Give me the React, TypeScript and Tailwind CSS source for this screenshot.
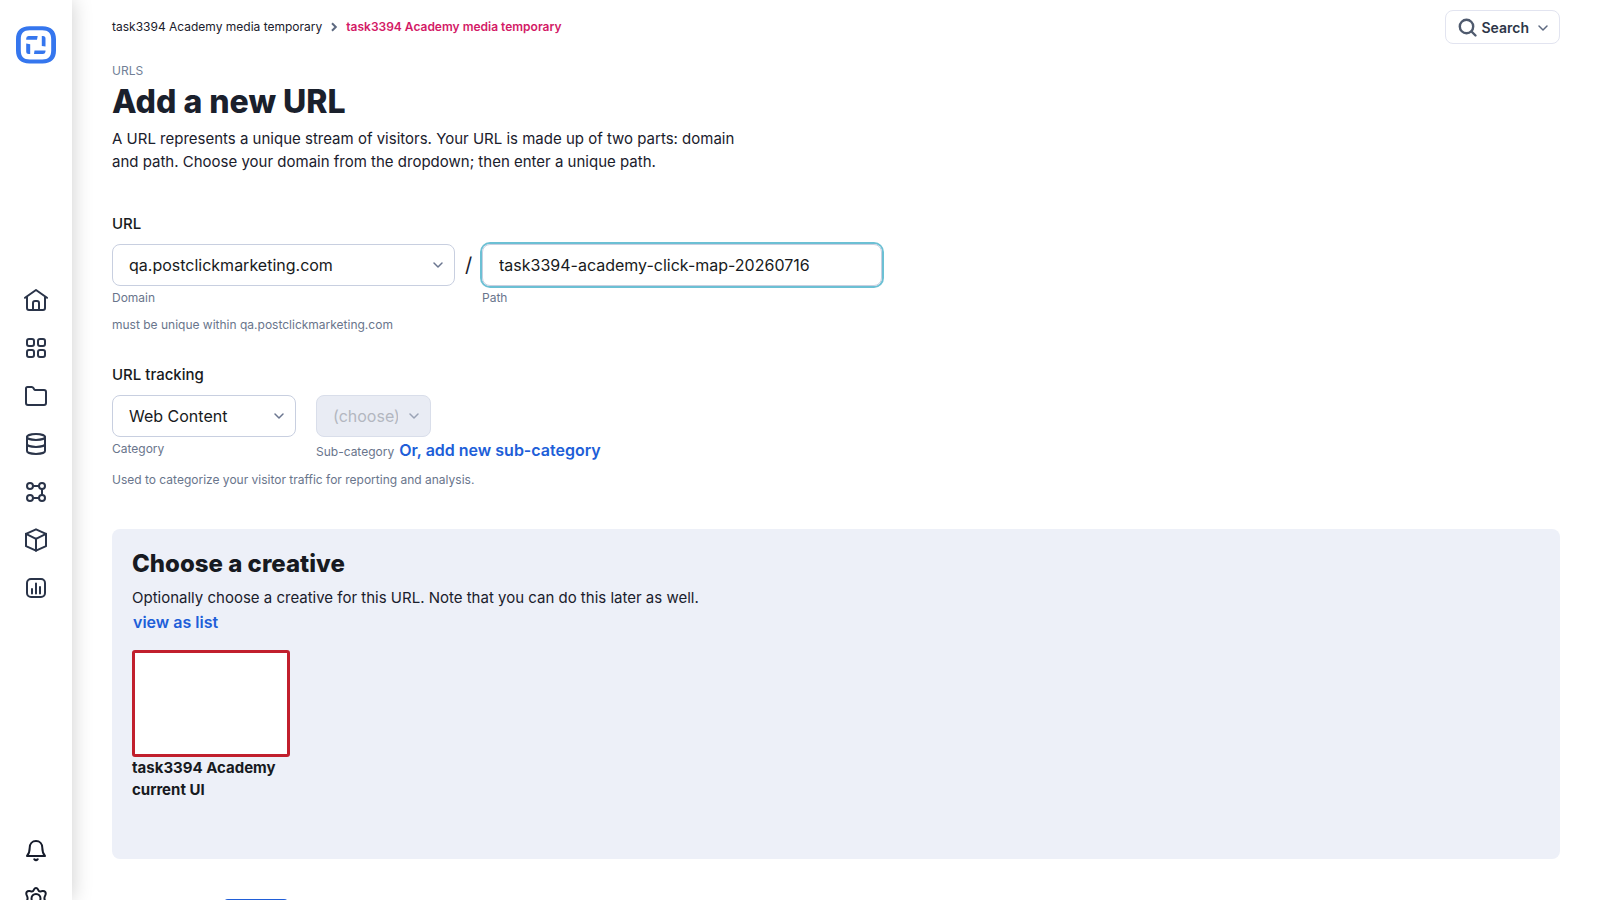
import type { ReactNode } from 'react';

const Icon = ({ children }: { children: ReactNode }) => (
  <svg
    viewBox="0 0 24 24"
    fill="none"
    stroke="currentColor"
    strokeWidth="2"
    strokeLinecap="round"
    strokeLinejoin="round"
    className="size-6"
    aria-hidden="true"
  >
    {children}
  </svg>
);

const Chevron = ({ className }: { className: string }) => (
  <svg
    viewBox="0 0 12 12"
    fill="none"
    stroke="currentColor"
    strokeWidth="1.5"
    strokeLinecap="round"
    strokeLinejoin="round"
    className={className}
    aria-hidden="true"
  >
    <path d="M2 4l4 4 4-4" />
  </svg>
);

const mainNav = [
  {
    label: 'Home',
    icon: (
      <>
        <path d="M1 9.8L12 2l11 7.8" />
        <path d="M3 9v11a2 2 0 0 0 2 2h14a2 2 0 0 0 2-2V9" />
        <path d="M9 22v-7a2 2 0 0 1 2-2h2a2 2 0 0 1 2 2v7" />
      </>
    ),
  },
  {
    label: 'Apps',
    icon: (
      <>
        <rect x="3" y="3" width="7" height="7" rx="2" />
        <rect x="14" y="3" width="7" height="7" rx="2" />
        <rect x="3" y="14" width="7" height="7" rx="2" />
        <rect x="14" y="14" width="7" height="7" rx="2" />
      </>
    ),
  },
  {
    label: 'Folders',
    icon: (
      <path d="M2 4.5a1.5 1.5 0 0 1 1.5-1.5h4.2a2 2 0 0 1 1.7 1l.7 1.2a1.5 1.5 0 0 0 1.3.8H20a2 2 0 0 1 2 2v11a2 2 0 0 1-2 2H4a2 2 0 0 1-2-2z" />
    ),
  },
  {
    label: 'Data',
    icon: (
      <>
        <ellipse cx="12" cy="5" rx="9" ry="2.9" />
        <path d="M3 5v14c0 1.6 4 2.9 9 2.9s9-1.3 9-2.9V5" />
        <path d="M3 12c0 1.6 4 2.9 9 2.9s9-1.3 9-2.9" />
      </>
    ),
  },
  {
    label: 'Flows',
    icon: (
      <>
        <circle cx="6" cy="6" r="3" />
        <circle cx="18" cy="6" r="3" />
        <circle cx="6" cy="18" r="3" />
        <circle cx="18" cy="18" r="3" />
        <path d="M9 6h6M18 9v6M9 18h6" />
      </>
    ),
  },
  {
    label: 'Packages',
    icon: (
      <>
        <path d="M12 1.3l10 4.5v12.4l-10 4.5-10-4.5V5.8z" />
        <path d="M2 5.8l10 5 10-5M12 10.8v11.9" />
      </>
    ),
  },
  {
    label: 'Reports',
    icon: (
      <>
        <rect x="3" y="3" width="18" height="18" rx="4" />
        <path d="M8 13v4.5M12 7.5v10M16 11v6.5" />
      </>
    ),
  },
];

const footerNav = [
  {
    label: 'Notifications',
    icon: (
      <>
        <path d="M3 18c2.3-2.5 2.7-5 2.7-8.2C5.7 5.8 8.3 3 12 3s6.3 2.8 6.3 6.8c0 3.2.4 5.7 2.7 8.2z" />
        <path d="M10.3 21.3c.9.9 2.5.9 3.4 0" />
      </>
    ),
  },
  {
    label: 'Settings',
    icon: (
      <>
        <circle cx="12" cy="12.5" r="4.5" />
        <path d="M10.2 3.1a2 2 0 0 1 3.6 0l.5 1.1a2 2 0 0 0 2.1 1.2l2.1-.3c2.5-.3 3.7 1.5 3 3.5l-.5 1.3a5 5 0 0 0 0 4.6l.5 1.3c.7 2-.5 3.8-3 3.5l-2.1-.3a2 2 0 0 0-2.1 1.2l-.5 1.1a2 2 0 0 1-3.6 0l-.5-1.1a2 2 0 0 0-2.1-1.2l-2.1.3c-2.500.3-3.700-1.500-3-3.500l.5-1.300a5 5 0 0 0 0-4.600l-.5-1.300c-.7-2 .5-3.800 3-3.500l2.100.3A2 2 0 0 0 9.700 4.200z" />
      </>
    ),
  },
];

function Sidebar() {
  return (
    <aside className="z-10 flex h-screen w-18 shrink-0 flex-col items-center overflow-y-clip bg-white shadow-[0_0_20px_rgba(0,0,0,0.2)]">
      <a href="#home" aria-label="Dashboard" className="mt-6 mb-56 block shrink-0">
        <svg viewBox="0 0 40 40" className="size-10 text-[#3576ee]" aria-hidden="true">
          <path
            fill="currentColor"
            fillRule="evenodd"
            d="M13.500 2.200h13C35.500 2.200 40 7 40 15.200v11.400c0 8.200-4.500 13-13.500 13h-13C4.500 39.600 0 34.800 0 26.600v-11.400C0 7 4.500 2.200 13.500 2.200zM13.800 6.300C7.500 6.300 4.800 9.300 4.800 15.300v11.200c0 6 2.700 9 9 9h12.400c6.300 0 9-3 9-9V15.300c0-6-2.700-9-9-9z"
          />
          <path
            fill="currentColor"
            d="M12.500 12H21.700L21 15.800H10.200v-1.300a2.500 2.500 0 0 1 2.300-2.500zM25.800 12H27a2.500 2.500 0 0 1 2.500 2.500V22.500L25.800 21.900zM10.200 19.600l4 .7V30H12.700a2.500 2.500 0 0 1-2.500-2.500zM18.500 26.400H29.500V27.600a2.400 2.400 0 0 1-2.400 2.400H18z"
          />
        </svg>
      </a>
      <nav aria-label="Main" className="flex shrink-0 flex-col gap-6 text-[#2a3449]">
        {mainNav.map((item) => (
          <a key={item.label} href="#nav" aria-label={item.label}>
            <Icon>{item.icon}</Icon>
          </a>
        ))}
      </nav>
      <nav
        aria-label="Account"
        className="mt-[238px] flex shrink-0 flex-col gap-6 text-[#161c2b]"
      >
        {footerNav.map((item) => (
          <a key={item.label} href="#account" aria-label={item.label}>
            <Icon>{item.icon}</Icon>
          </a>
        ))}
      </nav>
    </aside>
  );
}

function Select({
  id,
  option,
  width,
  disabled = false,
}: {
  id: string;
  option: string;
  width: string;
  disabled?: boolean;
}) {
  return (
    <div className={`relative ${width}`}>
      <select
        id={id}
        disabled={disabled}
        className="block h-[42px] w-full appearance-none rounded-lg border border-[#c8cfe0] bg-white pr-8 pl-4 text-base text-[#171a21] disabled:border-[#d9deea] disabled:bg-[#e9ecf4] disabled:text-[#b3b7c0] disabled:opacity-100"
      >
        <option>{option}</option>
      </select>
      <Chevron
        className={`pointer-events-none absolute top-[15px] right-[11px] size-3 ${disabled ? 'text-[#9aa3b5]' : 'text-[#6b7690]'}`}
      />
    </div>
  );
}

export default function App() {
  return (
    <div className="flex h-screen overflow-hidden bg-white font-['Inter',sans-serif] text-[#1a202c]">
      <Sidebar />
      <main className="min-w-0 flex-1 px-10">
        <header className="flex items-start justify-between pt-[10px]">
          <nav aria-label="Breadcrumb" className="flex h-[34px] items-center text-xs">
            <a href="#parent">task3394 Academy media temporary</a>
            <svg
              viewBox="0 0 24 12"
              fill="none"
              stroke="#5d6980"
              strokeWidth="2"
              className="h-3 w-6"
              aria-hidden="true"
            >
              <path d="M10 2.2L13.8 6 10 9.8" />
            </svg>
            <a href="#current" className="font-semibold text-[#d31a66]">
              task3394 Academy media temporary
            </a>
          </nav>
          <button
            type="button"
            className="flex h-[34px] items-center rounded-lg border border-[#e2e4f0] pt-px pr-[10px] pl-3 text-sm font-semibold text-[#2d3648]"
          >
            <svg
              viewBox="0 0 20 20"
              fill="none"
              stroke="#4f5a6e"
              strokeWidth="2.4"
              strokeLinecap="round"
              className="mr-[3px] size-5"
              aria-hidden="true"
            >
              <circle cx="8.5" cy="8.5" r="6.7" />
              <path d="M13.5 13.5l4 4" />
            </svg>
            Search
            <Chevron className="ml-2 size-3 text-[#5d6980]" />
          </button>
        </header>

        <p className="mt-[19px] text-xs leading-4 text-[#718096]">URLS</p>
        <h1 className="mt-1 text-[32px] leading-[38px] font-extrabold">Add a new URL</h1>
        <p className="mt-[6px] max-w-[640px] text-[15px] leading-[23px]">
          A URL represents a unique stream of visitors. Your URL is made up of two parts: domain and
          path. Choose your domain from the dropdown; then enter a unique path.
        </p>

        <fieldset className="mt-[41px]">
          <legend className="text-[15px] leading-5 font-medium text-[#171a21]">URL</legend>
          <div className="mt-[10px] flex">
            <div>
              <Select id="domain" option="qa.postclickmarketing.com" width="w-[343px]" />
              <label htmlFor="domain" className="mt-1 block text-xs leading-4 text-[#69758c]">
                Domain
              </label>
            </div>
            <span className="w-[27px] text-center text-xl leading-[42px]">/</span>
            <div>
              <input
                id="path"
                type="text"
                defaultValue="task3394-academy-click-map-20260716"
                className="block h-[42px] w-[400px] rounded-lg border border-[#c8cfe0] px-4 text-base text-[#171a21] ring-2 ring-[#6cc0d4] outline-none"
              />
              <label htmlFor="path" className="mt-1 block text-xs leading-4 text-[#69758c]">
                Path
              </label>
            </div>
          </div>
          <p className="mt-[11px] text-xs leading-4 text-[#69758c]">
            must be unique within qa.postclickmarketing.com
          </p>
        </fieldset>

        <fieldset className="mt-8">
          <legend className="text-[15px] leading-5 font-medium text-[#171a21]">URL tracking</legend>
          <div className="mt-[10px] flex gap-5">
            <div>
              <Select id="category" option="Web Content" width="w-46" />
              <label htmlFor="category" className="mt-1 block text-xs leading-4 text-[#69758c]">
                Category
              </label>
            </div>
            <div>
              <Select id="sub-category" option="(choose)" width="w-[115px]" disabled />
              <div className="mt-px flex items-baseline gap-[5px] leading-6">
                <label htmlFor="sub-category" className="text-xs text-[#69758c]">
                  Sub-category
                </label>
                <a href="#add-sub-category" className="font-semibold text-[#205ed8]">
                  Or, add new sub-category
                </a>
              </div>
            </div>
          </div>
          <p className="mt-[10px] text-xs leading-4 text-[#69758c]">
            Used to categorize your visitor traffic for reporting and analysis.
          </p>
        </fieldset>

        <section className="mt-[41px] rounded-lg bg-[#edf0f8] px-5 pt-5 pb-[58px]">
          <h2 className="text-2xl leading-[30px] font-extrabold text-[#171a21]">
            Choose a creative
          </h2>
          <p className="mt-[7px] text-[15px] leading-[23px]">
            Optionally choose a creative for this URL. Note that you can do this later as well.
          </p>
          <a
            href="#list"
            className="mt-px ml-px block w-fit leading-6 font-semibold text-[#205ed8]"
          >
            view as list
          </a>
          <button type="button" className="mt-4 block w-[158px] text-left">
            <span className="block h-[107px] rounded-[3px] border-3 border-[#c11f2d] bg-white" />
            <span className="block text-[15px] leading-[22px] font-bold text-[#171a21]">
              task3394 Academy current UI
            </span>
          </button>
        </section>

        <div className="mt-10 flex">
          <a href="#cancel" aria-label="Cancel" className="w-28" />
          <button type="button" aria-label="Save" className="h-10 w-16 rounded bg-[#205ed8]" />
        </div>
      </main>
    </div>
  );
}
